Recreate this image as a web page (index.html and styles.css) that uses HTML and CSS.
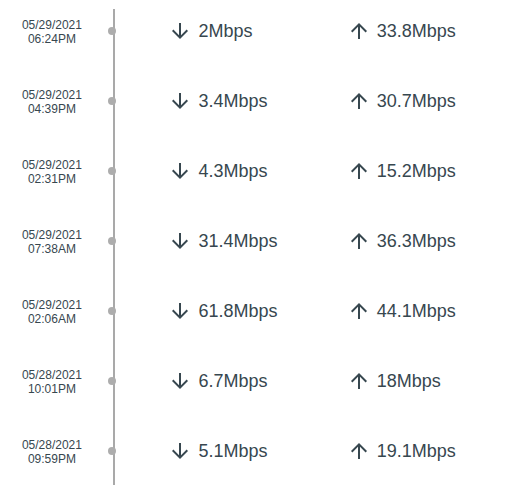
FILE: index.html
```html
<!DOCTYPE html>
<html>
<head>
<meta charset="utf-8">
<link rel="stylesheet" href="styles.css">
</head>
<body>
<div class="timeline">
  <div class="row">
    <div class="date">05/29/2021<br>06:24PM</div>
    <div class="marker"><span class="dot"></span></div>
    <div class="speed down"><svg class="ic" viewBox="0 0 24 24"><path d="M20 12l-1.41-1.41L13 16.17V4h-2v12.17l-5.58-5.59L4 12l8 8 8-8z"/></svg><span>2Mbps</span></div>
    <div class="speed"><svg class="ic" viewBox="0 0 24 24"><path d="M4 12l1.41 1.41L11 7.83V20h2V7.83l5.58 5.59L20 12l-8-8-8 8z"/></svg><span>33.8Mbps</span></div>
  </div>
  <div class="row">
    <div class="date">05/29/2021<br>04:39PM</div>
    <div class="marker"><span class="dot"></span></div>
    <div class="speed down"><svg class="ic" viewBox="0 0 24 24"><path d="M20 12l-1.41-1.41L13 16.17V4h-2v12.17l-5.58-5.59L4 12l8 8 8-8z"/></svg><span>3.4Mbps</span></div>
    <div class="speed"><svg class="ic" viewBox="0 0 24 24"><path d="M4 12l1.41 1.41L11 7.83V20h2V7.83l5.58 5.59L20 12l-8-8-8 8z"/></svg><span>30.7Mbps</span></div>
  </div>
  <div class="row">
    <div class="date">05/29/2021<br>02:31PM</div>
    <div class="marker"><span class="dot"></span></div>
    <div class="speed down"><svg class="ic" viewBox="0 0 24 24"><path d="M20 12l-1.41-1.41L13 16.17V4h-2v12.17l-5.58-5.59L4 12l8 8 8-8z"/></svg><span>4.3Mbps</span></div>
    <div class="speed"><svg class="ic" viewBox="0 0 24 24"><path d="M4 12l1.41 1.41L11 7.83V20h2V7.83l5.58 5.59L20 12l-8-8-8 8z"/></svg><span>15.2Mbps</span></div>
  </div>
  <div class="row">
    <div class="date">05/29/2021<br>07:38AM</div>
    <div class="marker"><span class="dot"></span></div>
    <div class="speed down"><svg class="ic" viewBox="0 0 24 24"><path d="M20 12l-1.41-1.41L13 16.17V4h-2v12.17l-5.58-5.59L4 12l8 8 8-8z"/></svg><span>31.4Mbps</span></div>
    <div class="speed"><svg class="ic" viewBox="0 0 24 24"><path d="M4 12l1.41 1.41L11 7.83V20h2V7.83l5.58 5.59L20 12l-8-8-8 8z"/></svg><span>36.3Mbps</span></div>
  </div>
  <div class="row">
    <div class="date">05/29/2021<br>02:06AM</div>
    <div class="marker"><span class="dot"></span></div>
    <div class="speed down"><svg class="ic" viewBox="0 0 24 24"><path d="M20 12l-1.41-1.41L13 16.17V4h-2v12.17l-5.58-5.59L4 12l8 8 8-8z"/></svg><span>61.8Mbps</span></div>
    <div class="speed"><svg class="ic" viewBox="0 0 24 24"><path d="M4 12l1.41 1.41L11 7.83V20h2V7.83l5.58 5.59L20 12l-8-8-8 8z"/></svg><span>44.1Mbps</span></div>
  </div>
  <div class="row">
    <div class="date">05/28/2021<br>10:01PM</div>
    <div class="marker"><span class="dot"></span></div>
    <div class="speed down"><svg class="ic" viewBox="0 0 24 24"><path d="M20 12l-1.41-1.41L13 16.17V4h-2v12.17l-5.58-5.59L4 12l8 8 8-8z"/></svg><span>6.7Mbps</span></div>
    <div class="speed"><svg class="ic" viewBox="0 0 24 24"><path d="M4 12l1.41 1.41L11 7.83V20h2V7.83l5.58 5.59L20 12l-8-8-8 8z"/></svg><span>18Mbps</span></div>
  </div>
  <div class="row">
    <div class="date">05/28/2021<br>09:59PM</div>
    <div class="marker"><span class="dot"></span></div>
    <div class="speed down"><svg class="ic" viewBox="0 0 24 24"><path d="M20 12l-1.41-1.41L13 16.17V4h-2v12.17l-5.58-5.59L4 12l8 8 8-8z"/></svg><span>5.1Mbps</span></div>
    <div class="speed"><svg class="ic" viewBox="0 0 24 24"><path d="M4 12l1.41 1.41L11 7.83V20h2V7.83l5.58 5.59L20 12l-8-8-8 8z"/></svg><span>19.1Mbps</span></div>
  </div>
</div>
</body>
</html>
```
FILE: styles.css
```css
html, body {
  margin: 0;
  padding: 0;
  background: #fff;
  overflow: hidden;
}
body {
  font-family: "Liberation Sans", Arial, sans-serif;
  color: #37474f;
}
.timeline {
  margin-top: -4px;
  background: linear-gradient(#a9a9a9, #a9a9a9) no-repeat 113px 13px / 2px 476px;
}
.row {
  display: flex;
  align-items: center;
  height: 70px;
}
.date {
  width: 106px;
  text-align: center;
  font-size: 12px;
  line-height: 14px;
  padding-top: 2px;
}
.marker {
  width: 16px;
  display: flex;
  justify-content: center;
}
.dot {
  width: 8px;
  height: 8px;
  border-radius: 50%;
  background: #adadad;
}
.speed {
  width: 180px;
  display: flex;
  align-items: center;
  gap: 6px;
  font-size: 18px;
}
.speed.down {
  width: 182px;
  margin-left: 49px;
}
.ic {
  width: 24px;
  height: 24px;
  fill: #37474f;
}
```
